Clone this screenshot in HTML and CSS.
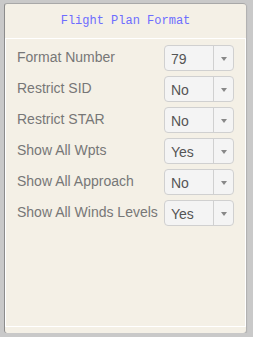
FILE: index.html
```html
<!DOCTYPE html>
<html>
	<head>
		<meta charset="UTF-8">
		<title>Flight Plan Format</title>
		<link rel="stylesheet" href="styles.css">
	</head>
	<body>
		<div class="panel">
			<!--标题-->
			<h3 class="title">Flight Plan Format</h3>

			<!--选项-->
			<div class="content">
				<div class="row">
					<span class="label">Format Number</span>
					<div class="select"><span class="value">79</span><i class="arrow"></i></div>
				</div>
				<div class="row">
					<span class="label">Restrict SID</span>
					<div class="select"><span class="value">No</span><i class="arrow"></i></div>
				</div>
				<div class="row">
					<span class="label">Restrict STAR</span>
					<div class="select"><span class="value">No</span><i class="arrow"></i></div>
				</div>
				<div class="row">
					<span class="label">Show All Wpts</span>
					<div class="select"><span class="value">Yes</span><i class="arrow"></i></div>
				</div>
				<div class="row">
					<span class="label">Show All Approach</span>
					<div class="select"><span class="value">No</span><i class="arrow"></i></div>
				</div>
				<div class="row">
					<span class="label">Show All Winds Levels</span>
					<div class="select"><span class="value">Yes</span><i class="arrow"></i></div>
				</div>
			</div>
		</div>
	</body>
</html>
```

FILE: styles.css
```css
*{
	margin: 0;
	padding: 0;
	box-sizing: border-box;
}
body{
	background: #c9c9c9;
	padding: 3px 0 0 4px;
	font-family: "Liberation Sans", Arial, sans-serif;
}
.panel{
	width: 242px;
	height: 330px;
	background: #f4f0e6;
	border-left: 1px solid #8c8c8c;
	border-top: 1px solid #a8a8a8;
	border-radius: 3px;
	box-shadow: 1px 1px 1px #b0b0b0;
	display: flex;
	flex-direction: column;
}
.panel .title{
	height: 34px;
	line-height: 34px;
	text-align: center;
	font-family: "Liberation Mono", "Courier New", monospace;
	font-size: 12px;
	font-weight: normal;
	color: #6d6dff;
}
.panel .content{
	width: 241px;
	height: 289px;
	border: 1px solid #fff;
	padding: 6px 0 0 11px;
}
.panel .row{
	display: flex;
	align-items: center;
	height: 26px;
	margin-bottom: 5px;
}
.panel .label{
	width: 147px;
	font-size: 14px;
	color: #777;
	margin-bottom: 3px;
}
.panel .select{
	display: flex;
	width: 70px;
	height: 26px;
	background: #f4f4f4;
	border: 1px solid #d0d0d0;
	border-radius: 4px;
}
.panel .value{
	flex: 1;
	padding: 5px 0 0 6px;
	font-size: 14px;
	color: #555;
	border-right: 1px solid #d0d0d0;
}
.panel .arrow{
	width: 19px;
	display: flex;
	align-items: center;
	justify-content: center;
}
.panel .arrow::after{
	content: "";
	border-left: 3px solid transparent;
	border-right: 3px solid transparent;
	border-top: 4px solid #888;
	margin-top: 2px;
}
```
